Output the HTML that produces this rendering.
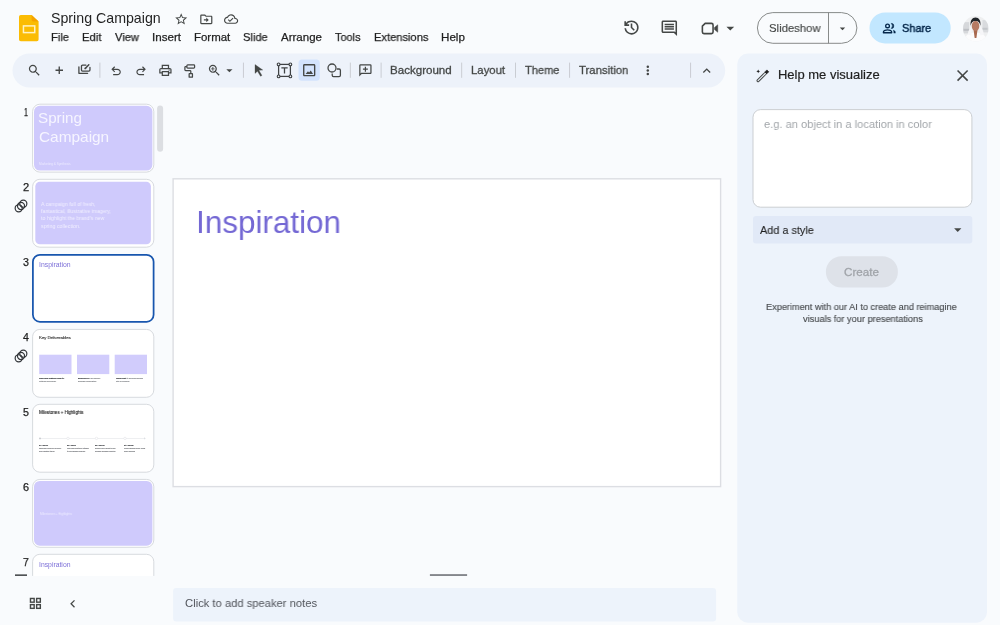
<!DOCTYPE html>
<html><head><meta charset="utf-8"><title>Spring Campaign - Google Slides</title>
<style>
*{box-sizing:border-box;margin:0;padding:0}
html,body{width:1000px;height:625px;overflow:hidden;background:#f9fbfd;font-family:"Liberation Sans",sans-serif;color:#1f1f1f}
svg{position:absolute;overflow:visible}
.t{position:absolute;white-space:nowrap;line-height:1;transform-origin:0 0;display:block;will-change:transform}
</style></head><body>
<!-- shapes -->
<svg style="left:0;top:0" width="1000" height="625" viewBox="0 0 1000 625">
<rect x="12.50" y="53.50" width="712.70" height="34.00" rx="17" fill="#edf2fa"/>
<rect x="298.50" y="59.40" width="21.30" height="21.30" rx="3.5" fill="#d3e3fd"/>
<rect x="99.45" y="62.60" width="0.90" height="15.20" rx="0" fill="#c6c9ce"/>
<rect x="242.95" y="62.60" width="0.90" height="15.20" rx="0" fill="#c6c9ce"/>
<rect x="349.85" y="62.60" width="0.90" height="15.20" rx="0" fill="#c6c9ce"/>
<rect x="380.65" y="62.60" width="0.90" height="15.20" rx="0" fill="#c6c9ce"/>
<rect x="461.25" y="62.60" width="0.90" height="15.20" rx="0" fill="#c6c9ce"/>
<rect x="515.05" y="62.60" width="0.90" height="15.20" rx="0" fill="#c6c9ce"/>
<rect x="569.15" y="62.60" width="0.90" height="15.20" rx="0" fill="#c6c9ce"/>
<rect x="690.15" y="62.60" width="0.90" height="15.20" rx="0" fill="#c6c9ce"/>
<rect x="757.40" y="12.60" width="99.50" height="30.70" rx="15.35" fill="none" stroke="#7b7e7d" stroke-width="0.9"/>
<rect x="828.05" y="12.60" width="0.90" height="30.70" rx="0" fill="#7b7e7d"/>
<rect x="869.50" y="12.40" width="81.20" height="31.00" rx="15.5" fill="#c2e7ff"/>
<rect x="32.60" y="104.20" width="121.20" height="67.90" rx="7.3" fill="#fff" stroke="#d0d3d8" stroke-width="0.85"/>
<rect x="34.00" y="105.70" width="118.40" height="64.90" rx="5.8" fill="#cfcafc"/>
<rect x="32.60" y="179.30" width="121.20" height="67.90" rx="7.3" fill="#fff" stroke="#d0d3d8" stroke-width="0.85"/>
<rect x="35.30" y="181.80" width="115.60" height="62.50" rx="4.6" fill="#cfcafc"/>
<rect x="32.90" y="254.85" width="120.70" height="66.95" rx="7" fill="#fff" stroke="#1856ae" stroke-width="1.75"/>
<rect x="32.60" y="329.40" width="121.20" height="67.90" rx="7.3" fill="#fff" stroke="#d0d3d8" stroke-width="0.85"/>
<rect x="32.60" y="404.30" width="121.20" height="67.90" rx="7.3" fill="#fff" stroke="#d0d3d8" stroke-width="0.85"/>
<rect x="32.60" y="479.40" width="121.20" height="67.90" rx="7.3" fill="#fff" stroke="#d0d3d8" stroke-width="0.85"/>
<rect x="34.00" y="480.90" width="118.40" height="64.90" rx="5.8" fill="#cfcafc"/>
<rect x="32.60" y="554.30" width="121.20" height="67.90" rx="7.3" fill="#fff" stroke="#d0d3d8" stroke-width="0.85"/>
<rect x="39.20" y="354.70" width="32.30" height="19.40" rx="0" fill="#d1ccfc"/>
<rect x="77.00" y="354.70" width="32.30" height="19.40" rx="0" fill="#d1ccfc"/>
<rect x="114.70" y="354.70" width="32.30" height="19.40" rx="0" fill="#d1ccfc"/>
<rect x="39.80" y="438.10" width="104.80" height="0.60" rx="0" fill="#e2e4e8"/>
<circle cx="40.000" cy="438.400" r="0.900" fill="#c4c7cc"/>
<circle cx="68.0" cy="438.400" r="1.200" fill="#fff" stroke="#dcdfe3" stroke-width="0.500"/>
<circle cx="96.5" cy="438.400" r="1.200" fill="#fff" stroke="#dcdfe3" stroke-width="0.500"/>
<circle cx="125.0" cy="438.400" r="1.200" fill="#fff" stroke="#dcdfe3" stroke-width="0.500"/>
<path d="M144 437.300l1.800 1.100-1.800 1.100z" fill="#dcdfe3"/>
<rect x="157.10" y="105.60" width="6.00" height="46.10" rx="3" fill="#dcdee2"/>
<rect x="0.00" y="575.90" width="170.00" height="49.10" rx="0" fill="#f9fbfd"/>
<rect x="15.00" y="574.40" width="12.00" height="1.50" rx="0" fill="#3c4043"/>
<rect x="173.10" y="178.80" width="547.50" height="307.80" rx="0" fill="#fff" stroke="#dcdee3" stroke-width="1.4"/>
<rect x="429.90" y="574.10" width="37.20" height="1.90" rx="0" fill="#84878c"/>
<rect x="173.10" y="588.00" width="543.00" height="33.40" rx="3.2" fill="#edf3fb"/>
<rect x="737.30" y="53.60" width="249.70" height="569.10" rx="10.5" fill="#edf3fb"/>
<rect x="753.00" y="109.60" width="218.90" height="97.60" rx="7.6" fill="#fff" stroke="#c6c9cd" stroke-width="0.9"/>
<rect x="753.00" y="215.90" width="219.30" height="27.60" rx="3" fill="#e1e9f7"/>
<rect x="825.90" y="256.30" width="72.00" height="31.20" rx="15.6" fill="#dee2e9"/>
</svg>
<!-- logo -->
<svg style="left:19.200px;top:14.700px" width="19.600" height="26.300" viewBox="0 0 19.600 26.300">
<path d="M1.800 0H12.600l7 6.500V24.500a1.800 1.800 0 0 1-1.800 1.800H1.800A1.800 1.800 0 0 1 0 24.500V1.800A1.800 1.800 0 0 1 1.800 0z" fill="#fbbc04"/>
<path d="M12.600 0l7 6.500H14.400a1.800 1.800 0 0 1-1.800-1.800z" fill="#f5a300"/>
<rect x="4.450" y="10.900" width="11.300" height="6.700" fill="none" stroke="#fff3c4" stroke-width="1.500"/>
</svg>
<svg style="left:962.700px;top:16.200px" width="25.600" height="25.600" viewBox="0 0 50 50"><defs><clipPath id="av"><circle cx="25" cy="25" r="25"/></clipPath><filter id="avb" x="-20%" y="-20%" width="140%" height="140%"><feGaussianBlur stdDeviation="1.400"/></filter></defs><g clip-path="url(#av)"><rect width="50" height="50" fill="#eeeff0"/><g filter="url(#avb)"><rect x="0" y="12" width="12" height="22" fill="#d6d8db"/><rect x="1" y="25" width="12" height="4" fill="#bdc0c4"/><rect x="38" y="8" width="12" height="24" fill="#d9dbde"/><rect x="38" y="23" width="10" height="4" fill="#c4c7cb"/><path d="M3 50c0-12 8-18 21-18s22 6 22 18z" fill="#fcfcfd"/><path d="M9 36c2-9 5-15 9-17l-2 19z" fill="#f6f6f8"/><path d="M41 36c-2-9-5-15-9-17l2 19z" fill="#f6f6f8"/><path d="M15 19c-1.500-10 3-16 9.500-16S35.500 9 34 19c-1-5.500-3.500-9-9.500-9s-8.500 3.500-9.500 9z" fill="#24252a"/><path d="M20.500 26h8l-2.300 17h-3.400z" fill="#a96a50"/><ellipse cx="24.500" cy="19.500" rx="7.400" ry="9.600" fill="#b67a64"/></g></g></svg>
<!-- text -->
<span class="t" style="left:51.10px;top:11.18px;font-size:14.2px;color:#242424;transform:scaleX(1.0007)">Spring Campaign</span>
<span class="t" style="left:50.95px;top:32.35px;font-size:11.4px;color:#1f1f1f;-webkit-text-stroke:0.25px #1f1f1f;transform:scaleX(0.9777)">File</span>
<span class="t" style="left:81.74px;top:32.35px;font-size:11.4px;color:#1f1f1f;-webkit-text-stroke:0.25px #1f1f1f;transform:scaleX(0.9879)">Edit</span>
<span class="t" style="left:114.92px;top:32.35px;font-size:11.4px;color:#1f1f1f;-webkit-text-stroke:0.25px #1f1f1f;transform:scaleX(0.9747)">View</span>
<span class="t" style="left:151.71px;top:32.35px;font-size:11.4px;color:#1f1f1f;-webkit-text-stroke:0.25px #1f1f1f;transform:scaleX(1.0184)">Insert</span>
<span class="t" style="left:193.92px;top:32.35px;font-size:11.4px;color:#1f1f1f;-webkit-text-stroke:0.25px #1f1f1f;transform:scaleX(1.0061)">Format</span>
<span class="t" style="left:243.24px;top:32.35px;font-size:11.4px;color:#1f1f1f;-webkit-text-stroke:0.25px #1f1f1f;transform:scaleX(0.9730)">Slide</span>
<span class="t" style="left:281.43px;top:32.35px;font-size:11.4px;color:#1f1f1f;-webkit-text-stroke:0.25px #1f1f1f;transform:scaleX(1.0108)">Arrange</span>
<span class="t" style="left:335.43px;top:32.35px;font-size:11.4px;color:#1f1f1f;-webkit-text-stroke:0.25px #1f1f1f;transform:scaleX(0.9591)">Tools</span>
<span class="t" style="left:373.65px;top:32.35px;font-size:11.4px;color:#1f1f1f;-webkit-text-stroke:0.25px #1f1f1f;transform:scaleX(0.9777)">Extensions</span>
<span class="t" style="left:440.81px;top:32.35px;font-size:11.4px;color:#1f1f1f;-webkit-text-stroke:0.25px #1f1f1f;transform:scaleX(1.0201)">Help</span>
<span class="t" style="left:390.44px;top:65.05px;font-size:11.4px;color:#444746;-webkit-text-stroke:0.3px #444746;transform:scaleX(1.0152)">Background</span>
<span class="t" style="left:471.05px;top:65.05px;font-size:11.4px;color:#444746;-webkit-text-stroke:0.3px #444746;transform:scaleX(0.9952)">Layout</span>
<span class="t" style="left:524.96px;top:65.05px;font-size:11.4px;color:#444746;-webkit-text-stroke:0.3px #444746;transform:scaleX(0.9730)">Theme</span>
<span class="t" style="left:579.35px;top:65.05px;font-size:11.4px;color:#444746;-webkit-text-stroke:0.3px #444746;transform:scaleX(0.9940)">Transition</span>
<span class="t" style="left:769.18px;top:23.05px;font-size:11.4px;color:#444746;-webkit-text-stroke:0.15px #444746;transform:scaleX(0.9926)">Slideshow</span>
<span class="t" style="left:902.24px;top:23.15px;font-size:11.4px;color:#04264a;-webkit-text-stroke:0.45px #04264a;transform:scaleX(0.9617)">Share</span>
<span class="t" style="left:778.09px;top:69.36px;font-size:12.8px;color:#1f1f1f;-webkit-text-stroke:0.2px #1f1f1f;transform:scaleX(1.0143)">Help me visualize</span>
<span class="t" style="left:763.81px;top:118.65px;font-size:11.4px;color:#a2a6aa;transform:scaleX(0.9745)">e.g. an object in a location in color</span>
<span class="t" style="left:759.95px;top:224.75px;font-size:11.4px;color:#1f1f1f;-webkit-text-stroke:0.1px #1f1f1f;transform:scaleX(0.9543)">Add a style</span>
<span class="t" style="left:844.24px;top:266.65px;font-size:11.4px;color:#a0a4a9;-webkit-text-stroke:0.3px #a0a4a9;transform:scaleX(1.0217)">Create</span>
<span class="t" style="left:766.49px;top:302.44px;font-size:9.4px;color:#4a4d50;-webkit-text-stroke:0.15px #4a4d50;transform:scaleX(0.9782)">Experiment with our AI to create and reimagine</span>
<span class="t" style="left:802.68px;top:313.54px;font-size:9.4px;color:#4a4d50;-webkit-text-stroke:0.15px #4a4d50;transform:scaleX(0.9827)">visuals for your presentations</span>
<span class="t" style="left:184.50px;top:598.03px;font-size:11.3px;color:#50535a;transform:scaleX(0.9924)">Click to add speaker notes</span>
<span class="t" style="left:195.64px;top:205.91px;font-size:32.0px;color:#7468d4;transform:scaleX(0.9823)">Inspiration</span>
<span class="t" style="left:24.49px;top:106.93px;font-size:10.6px;color:#1f1f1f;-webkit-text-stroke:0.25px #1f1f1f;transform:scaleX(0.6630)">1</span>
<span class="t" style="left:23.00px;top:181.83px;font-size:10.6px;color:#1f1f1f;-webkit-text-stroke:0.25px #1f1f1f;transform:scaleX(1.0510)">2</span>
<span class="t" style="left:23.12px;top:256.93px;font-size:10.6px;color:#1f1f1f;-webkit-text-stroke:0.25px #1f1f1f;transform:scaleX(1.0098)">3</span>
<span class="t" style="left:23.13px;top:331.93px;font-size:10.6px;color:#1f1f1f;-webkit-text-stroke:0.25px #1f1f1f;transform:scaleX(0.9907)">4</span>
<span class="t" style="left:23.12px;top:406.93px;font-size:10.6px;color:#1f1f1f;-webkit-text-stroke:0.25px #1f1f1f;transform:scaleX(1.0098)">5</span>
<span class="t" style="left:23.01px;top:481.93px;font-size:10.6px;color:#1f1f1f;-webkit-text-stroke:0.25px #1f1f1f;transform:scaleX(1.0300)">6</span>
<span class="t" style="left:23.04px;top:556.73px;font-size:10.6px;color:#1f1f1f;-webkit-text-stroke:0.25px #1f1f1f;transform:scaleX(0.9694)">7</span>
<span class="t" style="left:38.39px;top:110.20px;font-size:15.0px;color:#f6f5ff;transform:scaleX(1.0139)">Spring</span>
<span class="t" style="left:38.58px;top:129.20px;font-size:15.0px;color:#f6f5ff;transform:scaleX(1.0265)">Campaign</span>
<span class="t" style="left:38.58px;top:262.11px;font-size:6.6px;color:#7d70d8;transform:scaleX(1.0414)">Inspiration</span>
<span class="t" style="left:38.58px;top:561.71px;font-size:6.6px;color:#7d70d8;transform:scaleX(1.0346)">Inspiration</span>
<span class="t" style="left:38.56px;top:335.88px;font-size:4.4px;color:#1f1f1f;-webkit-text-stroke:0.1px #1f1f1f;transform:scaleX(0.9627)">Key Deliverables</span>
<span class="t" style="left:38.59px;top:410.84px;font-size:4.8px;color:#1f1f1f;-webkit-text-stroke:0.12px #1f1f1f;transform:scaleX(0.9000)">Milestones + Highlights</span>
<span class="t" style="left:41.00px;top:201.51px;font-size:5.3px;color:#f0eeff;transform:scaleX(0.9666)">A campaign full of fresh,</span>
<span class="t" style="left:41.00px;top:208.91px;font-size:5.3px;color:#f0eeff;transform:scaleX(0.9748)">fantastical, illustrative imagery,</span>
<span class="t" style="left:41.00px;top:216.41px;font-size:5.3px;color:#f0eeff;transform:scaleX(0.9844)">to highlight the brand’s new</span>
<span class="t" style="left:40.90px;top:223.81px;font-size:5.3px;color:#f0eeff;transform:scaleX(0.9896)">spring collection.</span>
<span class="t" style="left:38.56px;top:163.71px;font-size:2.7px;color:#ebe9fe;transform:scaleX(1.1837)">Marketing &amp; Synthesis</span>
<span class="t" style="left:40.11px;top:512.79px;font-size:3.2px;color:#ebe9fe;transform:scaleX(0.9727)">Milestones + Highlights</span>
<span class="t" style="left:39.23px;top:377.67px;font-size:2.4px;color:#4a4d51;font-weight:bold;-webkit-text-stroke:0.2px #4a4d51;transform:scaleX(0.7446)">High-value customer email to</span>
<span class="t" style="left:39.19px;top:380.57px;font-size:2.4px;color:#8b8e92;-webkit-text-stroke:0.15px #8b8e92;transform:scaleX(0.8187)">outreach and social</span>
<span class="t" style="left:78.00px;top:377.67px;font-size:2.4px;color:#4a4d51;font-weight:bold;-webkit-text-stroke:0.2px #4a4d51;transform:scaleX(0.6515)">Spring Pop-Up</span>
<span class="t" style="left:89.41px;top:377.67px;font-size:2.4px;color:#8b8e92;-webkit-text-stroke:0.15px #8b8e92;transform:scaleX(0.6342)">in San Francisco</span>
<span class="t" style="left:77.98px;top:380.57px;font-size:2.4px;color:#8b8e92;-webkit-text-stroke:0.15px #8b8e92;transform:scaleX(0.7056)">showcase collaborations</span>
<span class="t" style="left:116.33px;top:377.67px;font-size:2.4px;color:#4a4d51;font-weight:bold;-webkit-text-stroke:0.2px #4a4d51;transform:scaleX(0.6766)">Launch event</span>
<span class="t" style="left:127.38px;top:377.67px;font-size:2.4px;color:#8b8e92;-webkit-text-stroke:0.15px #8b8e92;transform:scaleX(0.6687)">to announce campaign</span>
<span class="t" style="left:116.45px;top:380.57px;font-size:2.4px;color:#8b8e92;-webkit-text-stroke:0.15px #8b8e92;transform:scaleX(0.7495)">with an audience</span>
<span class="t" style="left:38.90px;top:445.47px;font-size:2.4px;color:#4a4d51;font-weight:bold;-webkit-text-stroke:0.2px #4a4d51;transform:scaleX(0.7050)">01 – Mar 01</span>
<span class="t" style="left:38.81px;top:448.37px;font-size:2.4px;color:#808387;-webkit-text-stroke:0.15px #808387;transform:scaleX(0.6975)">Campaign kickoff for all brand</span>
<span class="t" style="left:38.81px;top:451.27px;font-size:2.4px;color:#808387;-webkit-text-stroke:0.15px #808387;transform:scaleX(0.6880)">and marketing teams</span>
<span class="t" style="left:67.20px;top:445.47px;font-size:2.4px;color:#4a4d51;font-weight:bold;-webkit-text-stroke:0.2px #4a4d51;transform:scaleX(0.7518)">02 – Mar 8</span>
<span class="t" style="left:67.11px;top:448.37px;font-size:2.4px;color:#808387;-webkit-text-stroke:0.15px #808387;transform:scaleX(0.6844)">High-value customer outreach</span>
<span class="t" style="left:67.17px;top:451.27px;font-size:2.4px;color:#808387;-webkit-text-stroke:0.15px #808387;transform:scaleX(0.7548)">to pre-release program</span>
<span class="t" style="left:95.30px;top:445.47px;font-size:2.4px;color:#4a4d51;font-weight:bold;-webkit-text-stroke:0.2px #4a4d51;transform:scaleX(0.7360)">03 – Mar 15</span>
<span class="t" style="left:95.21px;top:448.37px;font-size:2.4px;color:#808387;-webkit-text-stroke:0.15px #808387;transform:scaleX(0.6989)">Spring Pop-up event in San</span>
<span class="t" style="left:95.21px;top:451.27px;font-size:2.4px;color:#808387;-webkit-text-stroke:0.15px #808387;transform:scaleX(0.6324)">Francisco showcase collection</span>
<span class="t" style="left:123.60px;top:445.47px;font-size:2.4px;color:#4a4d51;font-weight:bold;-webkit-text-stroke:0.2px #4a4d51;transform:scaleX(0.7283)">04 – Mar 25</span>
<span class="t" style="left:123.52px;top:448.37px;font-size:2.4px;color:#808387;-webkit-text-stroke:0.15px #808387;transform:scaleX(0.5999)">Launch campaign publicly across</span>
<span class="t" style="left:123.64px;top:451.27px;font-size:2.4px;color:#808387;-webkit-text-stroke:0.15px #808387;transform:scaleX(0.6941)">wider audience</span>
<!-- icons -->
<svg style="left:26.95px;top:63.05px" width="14.8" height="14.8" viewBox="0 0 24 24"><g fill="#444746"><path d="M15.5 14h-.79l-.28-.27C15.41 12.59 16 11.11 16 9.5 16 5.91 13.09 3 9.5 3S3 5.91 3 9.5 5.910 16 9.5 16c1.610 0 3.090-.590 4.230-1.570l.270.280v.790l5 4.990L20.490 19l-4.990-5zm-6 0C7.010 14 5 11.990 5 9.500S7.010 5 9.500 5 14 7.010 14 9.500 11.990 14 9.500 14z" /></g></svg>
<svg style="left:55px;top:66px" width="9" height="9" viewBox="0 0 9 9"><path d="M0.500 4.200H8M4.250 0.450V7.950" fill="none" stroke="#444746" stroke-width="1.350"/></svg>
<svg style="left:76px;top:62px" width="16" height="14" viewBox="0 0 16 14"><g fill="none" stroke="#444746" stroke-width="1.300" stroke-linecap="round" stroke-linejoin="round"><path d="M2.900 4.900V11.350H11.600"/><path d="M9.900 3.150H6.500a1.050 1.050 0 0 0-1.050 1.050V8.100a1.050 1.050 0 0 0 1.050 1.050H12.900a1.050 1.050 0 0 0 1.050-1.050V5.300"/><path d="M9.500 6.200L12.800 2.700" stroke-width="1.500"/></g><circle cx="9.300" cy="6.400" r="0.950" fill="#444746"/></svg>
<svg style="left:108.90px;top:63.60px" width="14.2" height="14.2" viewBox="0 0 24 24"><g fill="#444746"><path d="M7 19v-2h7.100q1.575 0 2.738-1T18 13.500q0-1.500-1.162-2.500T14.100 10H7.800l2.600 2.600L9 14 4 9l5-5 1.400 1.400L7.800 8h6.300q2.425 0 4.163 1.575T20 13.500q0 2.350-1.737 3.925T14.100 19H7Z" /></g></svg>
<svg style="left:133.50px;top:63.60px" width="14.2" height="14.2" viewBox="0 0 24 24"><g fill="#444746"><g transform="translate(24,0) scale(-1,1)"><path d="M7 19v-2h7.100q1.575 0 2.738-1T18 13.500q0-1.500-1.162-2.500T14.100 10H7.800l2.600 2.600L9 14 4 9l5-5 1.400 1.400L7.800 8h6.300q2.425 0 4.163 1.575T20 13.500q0 2.350-1.737 3.925T14.100 19H7Z" /></g></g></svg>
<svg style="left:158.20px;top:62.60px" width="14.8" height="14.8" viewBox="0 0 24 24"><g fill="#444746"><path d="M16 8V5H8v3H6V3h12v5h-2ZM4 10h16H4Zm14 2.500q.425 0 .713-.288T19 11.500q0-.425-.288-.713T18 10.500q-.425 0-.713.287T17 11.500q0 .425.287.712T18 12.500ZM16 19v-4H8v4h8Zm2 2H6v-4H2v-6q0-1.275.875-2.138T5 8h14q1.275 0 2.138.862T22 11v6h-4v4Zm2-6v-4q0-.425-.288-.713T19 10H5q-.425 0-.713.287T4 11v4h2v-2h12v2h2Z" /></g></svg>
<svg style="left:184px;top:63.700px" width="12" height="14" viewBox="0 0 12 14"><g fill="none" stroke="#444746" stroke-width="1.250" stroke-linejoin="round"><rect x="2.900" y="0.900" width="7.700" height="3.200" rx="0.800"/><path d="M2.900 2.500H1.700a.8.800 0 0 0-.8.800V5.700a.8.800 0 0 0 .8.800H6a.8.800 0 0 1 .8.800V9.700"/><rect x="5.150" y="9.700" width="3.300" height="3.500" rx="0.300"/></g></svg>
<svg style="left:206.55px;top:63.05px" width="14.8" height="14.8" viewBox="0 0 24 24"><g fill="#444746"><path d="M15.5 14h-.79l-.28-.27C15.41 12.59 16 11.11 16 9.5 16 5.91 13.09 3 9.5 3S3 5.91 3 9.5 5.910 16 9.5 16c1.610 0 3.090-.590 4.230-1.570l.270.280v.790l5 4.990L20.490 19l-4.990-5zm-6 0C7.010 14 5 11.990 5 9.500S7.010 5 9.500 5 14 7.010 14 9.500 11.990 14 9.500 14zM8.750 6.600h1.500v2.150h2.150v1.500h-2.150v2.150h-1.500v-2.150H6.600v-1.500h2.150z" /></g></svg>
<svg style="left:222.30px;top:62.59px" width="14.8" height="14.8" viewBox="0 0 24 24"><g fill="#444746"><path d="M7 10l5 5 5-5z" /></g></svg>
<svg style="left:250px;top:60px" width="16" height="20" viewBox="0 0 16 20"><path d="M5 4.500V13.400L7.450 11.250L10.550 16.300L11.950 15.400L8.900 10.350L12.800 10.050Z" fill="#444746" stroke="#444746" stroke-width="0.300" stroke-linejoin="round"/></svg>
<svg style="left:276px;top:62px" width="18" height="18" viewBox="0 0 18 18"><rect x="2.600" y="2.400" width="11.800" height="12" fill="none" stroke="#3f4244" stroke-width="1.250"/><g fill="#edf2fa" stroke="#3f4244" stroke-width="1.100"><circle cx="2.600" cy="2.400" r="1.350"/><circle cx="14.400" cy="2.400" r="1.350"/><circle cx="2.600" cy="14.400" r="1.350"/><circle cx="14.400" cy="14.400" r="1.350"/></g><path d="M5.350 5.150H11.650V6.450H9.150V11.600H7.850V6.450H5.350Z" fill="#3f4244"/></svg>
<svg style="left:301.10px;top:62.00px" width="16.4" height="16.4" viewBox="0 0 24 24"><g fill="#444746"><path d="M19 5v14H5V5h14m0-2H5c-1.100 0-2 .900-2 2v14c0 1.100.900 2 2 2h14c1.100 0 2-.900 2-2V5c0-1.100-.900-2-2-2zM14.300 12.300L11.800 15.500 10.200 13.500 6.800 17.500H17.600Z" /></g></svg>
<svg style="left:326.43px;top:62.33px" width="16" height="16" viewBox="0 0 24 24"><g fill="#444746"><circle cx="9" cy="9" r="6" fill="none" stroke="#444746" stroke-width="1.900"/><path d="M16.200 10.500H19.600a2 2 0 0 1 2 2V19.900a2 2 0 0 1-2 2H11.300a2 2 0 0 1-2-2V17.300" fill="none" stroke="#444746" stroke-width="1.900"/></g></svg>
<svg style="left:358.40px;top:63.00px" width="14.8" height="14.8" viewBox="0 0 24 24"><g fill="#444746"><path d="M11 14h2v-3h3V9h-3V6h-2v3H8v2h3v3Zm-9 8V4q0-.825.588-1.413T4 2h16q.825 0 1.413.587T22 4v12q0 .825-.588 1.413T20 18H6l-4 4Zm3.150-6H20V4H4v13.125L5.150 16Z" /></g></svg>
<svg style="left:644px;top:64px" width="8" height="14" viewBox="0 0 8 14"><g fill="#444746"><circle cx="3.800" cy="2.700" r="1.250"/><circle cx="3.800" cy="6.400" r="1.250"/><circle cx="3.800" cy="10.100" r="1.250"/></g></svg>
<svg style="left:698.75px;top:62.74px" width="15.5" height="15.5" viewBox="0 0 24 24"><g fill="#444746"><path d="M12 8l-6 6 1.410 1.410L12 10.830l4.590 4.580L18 14z" /></g></svg>
<svg style="left:173.80px;top:11.90px" width="14.4" height="14.4" viewBox="0 0 24 24"><g fill="#444746"><path d="M22 9.240l-7.190-.620L12 2 9.190 8.630 2 9.240l5.460 4.730L5.820 21 12 17.270 18.180 21l-1.630-7.030L22 9.240zM12 15.400l-3.760 2.270 1-4.280-3.320-2.880 4.380-.380L12 6.100l1.710 4.040 4.380.380-3.320 2.880 1 4.280L12 15.400z" /></g></svg>
<svg style="left:198.80px;top:11.70px" width="14.6" height="14.6" viewBox="0 0 24 24"><g fill="#444746"><path d="M20 6h-8l-2-2H4c-1.100 0-2 .900-2 2v12c0 1.100.900 2 2 2h16c1.100 0 2-.900 2-2V8c0-1.100-.900-2-2-2zm0 12H4V6h5.170l2 2H20v10zm-8-1l4-4-4-4v3H8v2h4v3z" /></g></svg>
<svg style="left:224.00px;top:11.60px" width="14.2" height="14.2" viewBox="0 0 24 24"><g fill="#444746"><path d="M19.350 10.040C18.670 6.590 15.640 4 12 4 9.110 4 6.600 5.640 5.350 8.040 2.340 8.360 0 10.910 0 14c0 3.310 2.690 6 6 6h13c2.760 0 5-2.240 5-5 0-2.640-2.050-4.780-4.650-4.960zM19 18H6c-2.210 0-4-1.790-4-4 0-2.050 1.530-3.760 3.560-3.970l1.070-.110.500-.950C8.080 7.140 9.940 6 12 6c2.620 0 4.880 1.860 5.390 4.430l.300 1.500 1.530.110c1.560.100 2.780 1.410 2.780 2.960 0 1.650-1.350 3-3 3zm-9-3.820l-2.090-2.090L6.500 13.500 10 17l6.010-6.010-1.410-1.410z" /></g></svg>
<svg style="left:622.10px;top:18.20px" width="19.0" height="19.0" viewBox="0 0 24 24"><g fill="#444746"><path d="M12 21q-3.450 0-6.013-2.288T3.050 13H5.100q.350 2.600 2.313 4.300T12 19q2.925 0 4.963-2.038T19 12q0-2.925-2.038-4.963T12 5q-1.725 0-3.225.800T6.250 8H9v2H3V4h2v2.350q1.275-1.600 3.113-2.475T12 3q1.875 0 3.513.713t2.850 1.924q1.212 1.213 1.925 2.850T21 12q0 1.875-.713 3.513t-1.924 2.850q-1.213 1.212-2.850 1.925T12 21Zm2.800-4.800L11 12.400V7h2v4.600l3.200 3.200-1.400 1.400Z" /></g></svg>
<svg style="left:660.00px;top:18.60px" width="18.6" height="18.6" viewBox="0 0 24 24"><g fill="#444746"><path d="M21.990 4c0-1.100-.890-2-1.990-2H4c-1.100 0-2 .900-2 2v12c0 1.100.900 2 2 2h14l4 4-.010-18zM20 4v13.170L18.830 16H4V4h16zM6 12h12v2H6zm0-3h12v2H6zm0-3h12v2H6z" /></g></svg>
<svg style="left:700.20px;top:18.50px" width="19.0" height="19.0" viewBox="0 0 24 24"><g fill="#444746"><path d="M6.500 5.500H14.500a2 2 0 0 1 2 2V16.500a2 2 0 0 1-2 2H5a2 2 0 0 1-2-2V9z" fill="none" stroke="#444746" stroke-width="2" stroke-linejoin="round"/><path d="M18.300 10.800L22.400 7.300v9.400L18.300 13.200z" fill="#444746" stroke="#444746" stroke-width="0.600" stroke-linejoin="round"/></g></svg>
<svg style="left:721.10px;top:18.71px" width="18.6" height="18.6" viewBox="0 0 24 24"><g fill="#444746"><path d="M7 10l5 5 5-5z" /></g></svg>
<svg style="left:835.80px;top:21.53px" width="13" height="13" viewBox="0 0 24 24"><g fill="#444746"><path d="M7 10l5 5 5-5z" /></g></svg>
<svg style="left:881.58px;top:20.75px" width="14.8" height="14.8" viewBox="0 0 24 24"><g fill="#444746"><circle cx="9" cy="8" r="3" fill="none" stroke="#04264a" stroke-width="2.200"/><path d="M2.300 19v-1c0-2.400 4.400-3.700 6.700-3.700s6.700 1.300 6.700 3.700v1z" fill="none" stroke="#04264a" stroke-width="2.200" stroke-linejoin="round"/><path d="M15 3.800a4.200 4.200 0 0 1 0 8.400a6 6 0 0 0 0-8.400z" fill="#04264a" stroke="#04264a" stroke-width="0.800" stroke-linejoin="round"/><path d="M17.800 14.300c2.200.700 4.200 1.900 4.200 3.700v2h-3.200v-2.200c0-1.400-.4-2.500-1-3.500z" fill="#04264a"/></g></svg>
<svg style="left:755px;top:68px" width="16" height="16" viewBox="0 0 16 16"><path d="M3.100 12.700L10.300 5.500" stroke="#444746" stroke-width="3.100" stroke-linecap="round" fill="none"/><path d="M3.100 12.700L10.300 5.500" stroke="#edf3fb" stroke-width="1.100" stroke-linecap="round" fill="none"/><path d="M11.900 1.900l1.900 1.900-2 2-1.900-1.900z" fill="#1f1f1f" stroke="#1f1f1f" stroke-width="0.600" stroke-linejoin="round"/><path d="M3.200 1.500l.55 1.300 1.300.55-1.300.55-.55 1.300-.55-1.300-1.300-.55 1.300-.55z" fill="#1f1f1f"/></svg>
<svg style="left:953.40px;top:65.90px" width="19.2" height="19.2" viewBox="0 0 24 24"><g fill="#444746"><path d="M19 6.410L17.590 5 12 10.590 6.410 5 5 6.410 10.590 12 5 17.590 6.410 19 12 13.410 17.590 19 19 17.590 13.410 12z" /></g></svg>
<svg style="left:949.25px;top:221.19px" width="17.5" height="17.5" viewBox="0 0 24 24"><g fill="#444746"><path d="M7 10l5 5 5-5z" fill="#444746"/></g></svg>
<svg style="left:27.70px;top:596.30px" width="14.8" height="14.8" viewBox="0 0 24 24"><g fill="#444746"><g fill="none" stroke="#444746" stroke-width="2.300"><rect x="4" y="4" width="6" height="6"/><rect x="14" y="4" width="6" height="6"/><rect x="4" y="14" width="6" height="6"/><rect x="14" y="14" width="6" height="6"/></g></g></svg>
<svg style="left:65.24px;top:596.25px" width="15.5" height="15.5" viewBox="0 0 24 24"><g fill="#444746"><path d="M15.410 7.410L14 6l-6 6 6 6 1.410-1.410L10.830 12z" /></g></svg>
<svg style="left:13.3px;top:197.8px" width="16" height="16" viewBox="0 0 16 16"><g fill="none" stroke="#34373b" stroke-width="1.200"><circle cx="5.700" cy="10.300" r="3.550"/><circle cx="8" cy="8" r="3.550"/><circle cx="10.300" cy="5.700" r="3.550"/></g></svg>
<svg style="left:13.3px;top:347.8px" width="16" height="16" viewBox="0 0 16 16"><g fill="none" stroke="#34373b" stroke-width="1.200"><circle cx="5.700" cy="10.300" r="3.550"/><circle cx="8" cy="8" r="3.550"/><circle cx="10.300" cy="5.700" r="3.550"/></g></svg>
</body></html>
